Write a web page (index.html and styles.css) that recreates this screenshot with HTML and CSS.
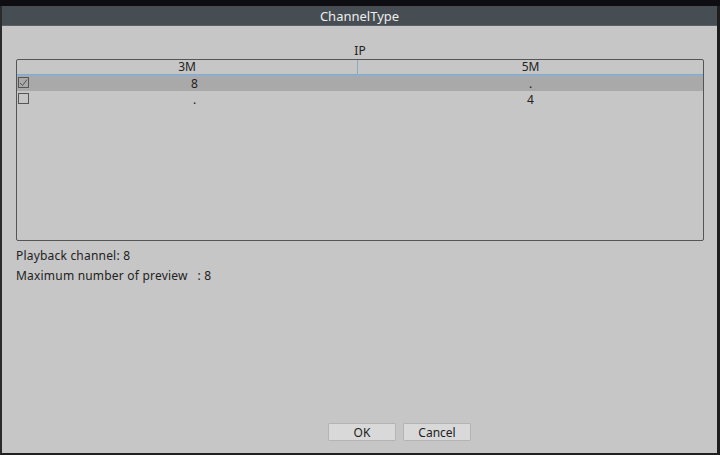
FILE: index.html
```html
<!DOCTYPE html>
<html>
<head>
  <link rel="stylesheet" href="styles.css">
</head>
<body>
  <div class="screen">
    <div class="topstrip"></div>
    <div class="dialog">
      <div class="title">ChannelType</div>
      <div class="content">
        <div class="group-label">IP</div>
        <div class="list">
          <div class="list-head">
            <div class="col">3M</div>
            <div class="col">5M</div>
          </div>
          <div class="row selected">
            <span class="check checked">
              <svg width="9" height="9" viewBox="0 0 9 9"><path d="M1 5 L3.5 7.5 L8 1.5" fill="none" stroke="#555" stroke-width="1"/></svg>
            </span>
            <div class="cell first">8</div>
            <div class="cell">.</div>
          </div>
          <div class="row">
            <span class="check"></span>
            <div class="cell first">.</div>
            <div class="cell">4</div>
          </div>
        </div>
        <div class="info">Playback channel: 8</div>
        <div class="info">Maximum number of preview &nbsp;&nbsp;: 8</div>
        <div class="buttons">
          <button class="btn">OK</button>
          <button class="btn">Cancel</button>
        </div>
      </div>
    </div>
  </div>
</body>
</html>
```

FILE: styles.css
```css
body {
  margin: 0;
  background-color: #0e0e10;
  font-family: "Noto Sans", "Open Sans", sans-serif;
  font-size: 12px;
  color: #222;
}

.screen {
  width: 720px;
  height: 455px;
  display: flex;
  flex-direction: column;
}

.topstrip {
  height: 6px;
  background-color: #0e0e12;
}

.dialog {
  flex: 1;
  display: flex;
  flex-direction: column;
  border-left: 2px solid #2a2a2a;
  border-right: 3px solid #1e1e1e;
  border-bottom: 2px solid #202020;
  background-color: #c6c6c6;
}

.title {
  height: 20px;
  line-height: 20px;
  background-color: #464d53;
  color: #eeeeee;
  text-align: center;
  font-size: 13px;
  border-bottom: 1px solid #5a6066;
  box-sizing: border-box;
}

.content {
  flex: 1;
  display: flex;
  flex-direction: column;
  padding: 0 13px 0 14px;
}

.group-label {
  margin-top: 17px;
  height: 16px;
  line-height: 16px;
  text-align: center;
}

.list {
  height: 182px;
  border: 1px solid #555;
  border-radius: 2px;
  box-sizing: border-box;
}

.list-head {
  display: grid;
  grid-template-columns: 341px 1fr;
  height: 15px;
  border-bottom: 1px solid #8ea7c2;
  box-sizing: border-box;
}

.list-head .col {
  text-align: center;
  line-height: 14px;
}

.list-head .col:first-child {
  border-right: 1px solid #8ea7c2;
}

.row {
  position: relative;
  display: grid;
  grid-template-columns: 341px 1fr;
  height: 16px;
  box-sizing: border-box;
  padding-top: 1px;
  line-height: 15px;
}

.row.selected {
  background-color: #a9a9a9;
}

.cell {
  text-align: center;
}

.cell.first {
  padding-left: 14px;
}

.check {
  position: absolute;
  left: 1px;
  top: 2px;
  width: 9px;
  height: 9px;
  border: 1px solid #555;
  display: flex;
  align-items: center;
  justify-content: center;
}

.info {
  height: 16px;
  line-height: 16px;
  margin-top: 7px;
  letter-spacing: 0.2px;
}

.info + .info {
  margin-top: 4px;
}

.buttons {
  margin-top: auto;
  margin-bottom: 12px;
  padding-left: 312px;
  display: flex;
  gap: 7px;
}

.btn {
  width: 68px;
  height: 18px;
  padding: 0;
  font-family: "Noto Sans", "Open Sans", sans-serif;
  font-size: 12px;
  color: #222;
  background-color: #d9d9d9;
  border: 1px solid #b4b4b4;
  border-radius: 1px;
}
```
